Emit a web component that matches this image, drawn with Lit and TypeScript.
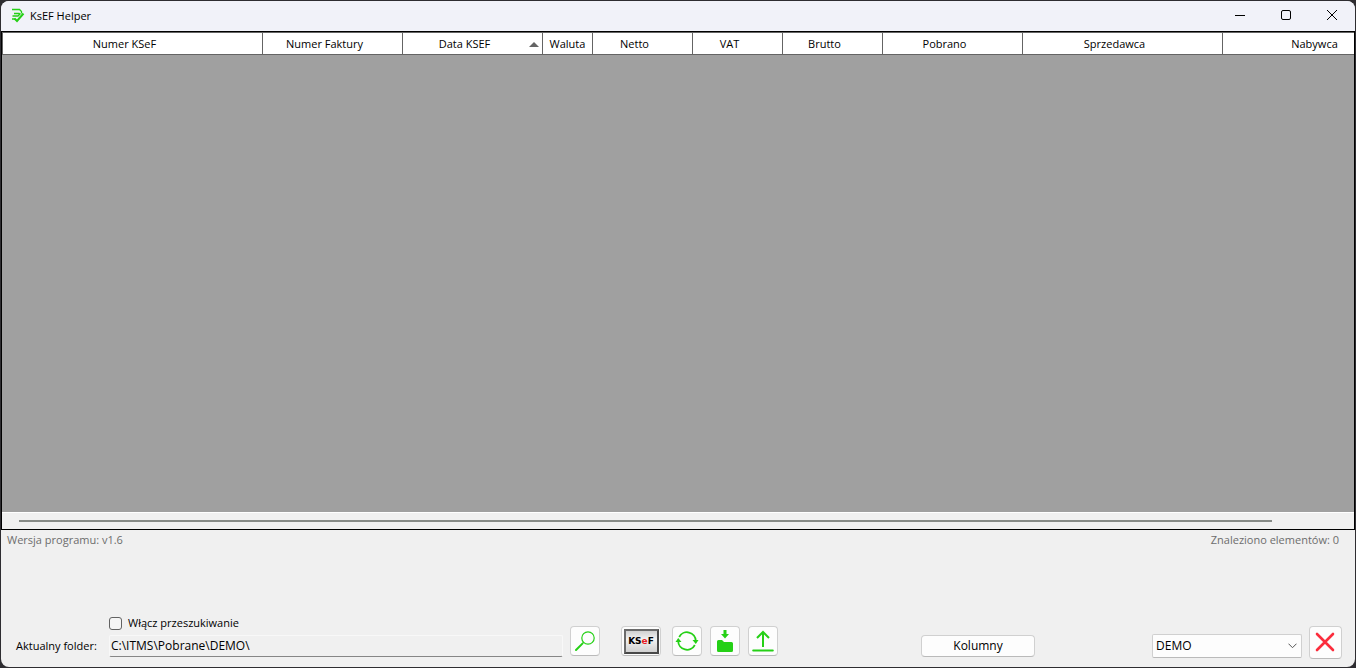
import { LitElement, html, css, svg } from "lit";
import { customElement, state } from "lit/decorators.js";

interface Column {
  title: string;
  width: number;
  sorted?: boolean;
  narrow?: boolean;
}

const COLUMNS: Column[] = [
  { title: "Numer KSeF", width: 260 },
  { title: "Numer Faktury", width: 140 },
  { title: "Data KSEF", width: 140, sorted: true },
  { title: "Waluta", width: 50, narrow: true },
  { title: "Netto", width: 100 },
  { title: "VAT", width: 90 },
  { title: "Brutto", width: 100 },
  { title: "Pobrano", width: 140 },
  { title: "Sprzedawca", width: 200 },
  { title: "Nabywca", width: 200 },
];

const GREEN = "#25d016";

const logo = svg`
  <svg width="14" height="16" viewBox="0 0 14 16" fill="none" stroke=${GREEN} stroke-width="1.3">
    <path d="M1 1.500H8.500L10.500 3.500V5.500M3 5.500H8.500M1.500 8H7L9.500 5.500M1 11H4"/>
    <path d="M3.500 10.500L6 13L12.500 5.500" stroke-width="2"/>
  </svg>`;

const searchIcon = svg`
  <svg width="22" height="22" viewBox="0 0 22 22" fill="none" stroke=${GREEN}>
    <circle cx="14" cy="8" r="6.2" stroke-width="1.2"/>
    <path d="M9.6 12.4L8.3 13.7" stroke-width="1.2"/>
    <path d="M8.4 13.6L2 20" stroke-width="2" stroke-linecap="round"/>
  </svg>`;

const refreshIcon = svg`
  <svg width="24" height="22" viewBox="0 0 24 22" fill="none" stroke=${GREEN} stroke-width="1.8">
    <path d="M4.200 7A8.800 8.800 0 0 1 20.800 11M19.800 15A8.800 8.800 0 0 1 3.200 11"/>
    <path d="M17.500 10H23.500L20.800 14ZM.5 12H6.500L3.200 8Z" fill=${GREEN} stroke="none"/>
  </svg>`;

const downloadIcon = svg`
  <svg width="18" height="24" viewBox="0 0 18 24" fill=${GREEN}>
    <path d="M7.500 1H10.500V5H13L9 9.500L5 5H7.500Z"/>
    <path d="M1 12.500Q1 11 2.500 11H6L8 13H15.500Q17 13 17 14.500V21.500Q17 23 15.500 23H2.500Q1 23 1 21.500Z"/>
  </svg>`;

const uploadIcon = svg`
  <svg width="22" height="22" viewBox="0 0 22 22" fill="none" stroke=${GREEN} stroke-width="2">
    <path d="M11 17V2M5 8L11 2L17 8"/>
    <path d="M1.200 20.500H20.800" stroke-linecap="round"/>
  </svg>`;

const exitIcon = svg`
  <svg width="21" height="21" viewBox="0 0 21 21" fill="none" stroke="#fb2c3c" stroke-width="2.600" stroke-linecap="round">
    <path d="M2 2L18 18M18 2L2 18"/>
  </svg>`;

@customElement("app-root")
export class AppRoot extends LitElement {
  @state() private searching = false;

  static styles = css`
    :host {
      display: block;
      height: 100vh;
      box-sizing: border-box;
      padding: 1px;
      background: #2e2d31;
      color: #000;
      font: 11px/16px "Open Sans", "Noto Sans", sans-serif;
    }
    * {
      box-sizing: border-box;
    }
    svg {
      display: block;
    }
    button,
    input,
    select {
      font: inherit;
      color: inherit;
      margin: 0;
    }
    .window {
      display: flex;
      flex-direction: column;
      height: 100%;
      overflow: hidden;
      border-radius: 8px;
      background: #f0f0f0;
    }
    .titlebar {
      display: flex;
      align-items: center;
      height: 30px;
      padding-left: 10px;
      gap: 5px;
      background: #f1f2f9;
    }
    .caption {
      flex: 1;
    }
    .controls {
      display: flex;
      height: 28px;
      align-self: flex-start;
    }
    .control {
      display: flex;
      align-items: center;
      justify-content: center;
      width: 46px;
      padding: 0;
      border: 0;
      background: none;
    }
    .grid {
      flex: 1;
      display: flex;
      flex-direction: column;
      min-height: 0;
      border: 1px solid #000;
      background: #a0a0a0;
    }
    .rows {
      flex: 1;
      overflow: hidden;
    }
    .table {
      width: 0;
      table-layout: fixed;
      border-collapse: separate;
      border-spacing: 0;
      border-left: 1px solid #646464;
    }
    .head {
      position: relative;
      height: 23px;
      padding: 1px 16px 0 0;
      border: solid #646464;
      border-width: 1px 1px 1px 0;
      background: #fff;
      font-weight: 400;
      text-align: center;
      white-space: nowrap;
    }
    .head.narrow {
      padding-right: 0;
    }
    .arrow {
      position: absolute;
      right: 3px;
      top: 9px;
    }
    .scroll {
      height: 17px;
      padding: 7px 82px 0 17px;
      border-top: 1px solid #fff;
      background: #f0f0f0;
    }
    .thumb {
      height: 2px;
      background: #868a86;
    }
    .status {
      display: flex;
      justify-content: space-between;
      padding: 2px 16px 0 6px;
      color: #6d6d6d;
    }
    .footer {
      display: flex;
      align-items: flex-end;
      height: 119px;
      padding: 0 13px 8px 15px;
    }
    .folder {
      flex: 1;
      display: grid;
      grid-template-columns: 93px 1fr;
      row-gap: 4px;
      align-items: center;
      padding-bottom: 2px;
    }
    .toggle {
      grid-column: 2;
      display: flex;
      align-items: center;
      gap: 6px;
    }
    .check {
      appearance: none;
      width: 13px;
      height: 13px;
      border: 1px solid #626262;
      border-radius: 3px;
      background: #f5f5f5;
    }
    .check:checked {
      background: #25d016;
    }
    .path {
      width: 100%;
      height: 22px;
      padding: 0 1px 2px;
      border: 1px solid #f8f8f8;
      border-bottom-color: #868686;
      border-radius: 2px;
      background: #f0f0f0;
      outline: none;
      font-size: 12px;
    }
    .tools {
      display: flex;
      gap: 8px;
      padding: 0 0 3px 7px;
    }
    .tool,
    .exit,
    .columns {
      display: flex;
      align-items: center;
      justify-content: center;
      padding: 0;
      border: 1px solid #d0d0d0;
      border-bottom-color: #bababa;
      border-radius: 4px;
      background: #fdfdfd;
    }
    .tool {
      width: 30px;
      height: 30px;
    }
    .ksef {
      width: 40px;
      margin: 0 3px 0 13px;
    }
    .plate {
      width: 35px;
      height: 25px;
      border: 2px solid #6a6a6a;
      border-right-color: #484848;
      border-bottom-color: #484848;
      background: linear-gradient(#d0d0d0, #f2f2f2 40%, #d0d0d0);
      font: 700 9px/21px "DejaVu Sans", sans-serif;
      text-align: center;
    }
    .accent {
      color: #e81c24;
    }
    .columns {
      width: 114px;
      height: 22px;
      margin: 0 117px 2px 143px;
      font-size: 12px;
    }
    .mode {
      position: relative;
      width: 150px;
      margin: 0 7px 1px 0;
    }
    .select {
      appearance: none;
      display: block;
      width: 100%;
      height: 24px;
      padding: 0 20px 0 3px;
      border: 1px solid #d0d0d0;
      border-bottom-color: #bababa;
      border-radius: 2px;
      background: #fdfdfd;
      font-size: 12px;
    }
    .chevron {
      position: absolute;
      right: 5px;
      top: 9px;
      pointer-events: none;
    }
    .exit {
      width: 33px;
      height: 33px;
    }
  `;

  private toggleSearch(event: Event) {
    this.searching = (event.target as HTMLInputElement).checked;
  }

  render() {
    return html`
      <div class="window">
        <header class="titlebar">
          ${logo}
          <span class="caption">KsEF Helper</span>
          <div class="controls">
            <button class="control" aria-label="Minimalizuj">
              <svg width="10" height="10" viewBox="0 0 10 10"><path d="M0 5.500H10" stroke="#000" /></svg>
            </button>
            <button class="control" aria-label="Maksymalizuj">
              <svg width="10" height="10" viewBox="0 0 10 10">
                <rect x=".5" y=".5" width="9" height="9" rx="1.500" fill="none" stroke="#000" />
              </svg>
            </button>
            <button class="control" aria-label="Zamknij">
              <svg width="10" height="10" viewBox="0 0 10 10"><path d="M0 0L10 10M10 0L0 10" stroke="#000" /></svg>
            </button>
          </div>
        </header>

        <main class="grid">
          <div class="rows">
            <table class="table">
              <colgroup>
                ${COLUMNS.map((c) => html`<col style="width:${c.width}px" />`)}
              </colgroup>
              <thead>
                <tr>
                  ${COLUMNS.map(
                    (c) => html`<th class="head ${c.narrow ? "narrow" : ""}" scope="col">
                      ${c.title}${c.sorted
                        ? html`<svg class="arrow" width="10" height="5" viewBox="0 0 10 5"><path d="M0 5L5 0L10 5Z" fill="#646464" /></svg>`
                        : ""}
                    </th>`
                  )}
                </tr>
              </thead>
            </table>
          </div>
          <div class="scroll"><div class="thumb"></div></div>
        </main>

        <div class="status">
          <span>Wersja programu: v1.6</span>
          <span>Znaleziono elementów: 0</span>
        </div>

        <footer class="footer">
          <div class="folder">
            <label class="toggle">
              <input class="check" type="checkbox" .checked=${this.searching} @change=${this.toggleSearch} />
              Włącz przeszukiwanie
            </label>
            <label for="path">Aktualny folder:</label>
            <input class="path" id="path" type="text" readonly value="C:\\ITMS\\Pobrane\\DEMO\\" />
          </div>
          <div class="tools">
            <button class="tool" aria-label="Szukaj">${searchIcon}</button>
            <button class="tool ksef"><span class="plate">KS<span class="accent">e</span>F</span></button>
            <button class="tool" aria-label="Odśwież">${refreshIcon}</button>
            <button class="tool" aria-label="Pobierz">${downloadIcon}</button>
            <button class="tool" aria-label="Wyślij">${uploadIcon}</button>
          </div>
          <button class="columns">Kolumny</button>
          <div class="mode">
            <select class="select" aria-label="Środowisko">
              <option>DEMO</option>
            </select>
            <svg class="chevron" width="9" height="6" viewBox="0 0 9 6"><path d="M.5 .7L4.500 4.700L8.500 .7" fill="none" stroke="#555" /></svg>
          </div>
          <button class="exit" aria-label="Zakończ">${exitIcon}</button>
        </footer>
      </div>
    `;
  }
}
